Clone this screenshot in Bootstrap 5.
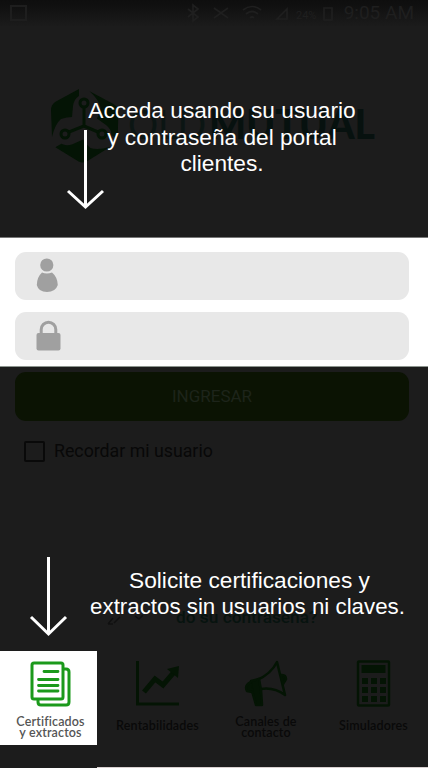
<!DOCTYPE html>
<html lang="es">
<head>
<meta charset="utf-8">
<meta name="viewport" content="width=device-width, initial-scale=1">
<title>Acceso clientes</title>
<link rel="stylesheet" href="https://cdn.jsdelivr.net/npm/bootstrap@5.3.0/dist/css/bootstrap.min.css">
<style>
body{background:#1c1c1c;font-family:"Liberation Sans",Arial,sans-serif;overflow:hidden}
.screen{width:428px;height:768px;overflow:hidden}
.statusbar{height:26px;padding:0 14px 0 10px;background:linear-gradient(#0e0e0e 0,#101010 20%,#1b1b1b 100%);color:#1f1f1f;font:19px/26px Roboto,sans-serif}
.brand{height:211px;padding:60px 0 0 48px}
.fields{height:130px;padding:14px 19px 0 15px;gap:12px;background:#fff;border-bottom:1px solid #8c948e;border-top:1px solid #777}
.field{height:48px;border-radius:11px;background:#e8e8e8;padding-left:21px}
.enter{height:49px;margin:5px 19px 0 15px;border-radius:11px;background:#0b1303;color:#1d241a;font:17px/49px Roboto,sans-serif;text-align:center}
.remember{margin:19px 0 0 24px;height:22px;gap:9px;color:#080808;font:17.75px/22px Roboto,sans-serif}
.tick{width:21px;height:21px;border:2px solid #090909;border-radius:2px}
.forgot{height:189px;padding:145px 0 0 107px;color:#07130f;font:500 17.3px/20px Roboto,sans-serif}
.options{height:94px}
.option{flex:none;font:600 12.5px/10.5px Lato,sans-serif;color:#090909;text-align:center;letter-spacing:.15px}
.option .caption{height:26px;padding-top:7px}
.option.lit{background:#fff;color:#555}
.option svg{margin-top:7px}
.foot{margin:22px 0 0 97px;height:1px;background:#d8d0d0}
.hint{position:absolute;color:#fff;font-size:22.7px;line-height:26.5px;text-align:center;white-space:nowrap}
.hint-login{left:88px;top:97px;width:268px}
.hint-docs{left:90px;top:566.5px;width:315px}
.hint-tight{font-size:22.3px}
.arrow{position:absolute}
.arrow-login{left:66px;top:129px}
.arrow-docs{left:29px;top:556px}
</style>
<script src="https://cdn.jsdelivr.net/npm/bootstrap@5.3.0/dist/js/bootstrap.bundle.min.js"></script>
</head>
<body>
<main class="screen position-relative d-flex flex-column">
  <div class="statusbar d-flex justify-content-between align-items-center flex-shrink-0">
    <svg width="18" height="18" fill="none" stroke="#1e1e1e" stroke-width="2"><rect x="1" y="2" width="15" height="14"/></svg>
    <div class="d-flex align-items-center gap-2">
      <svg width="150" height="20" fill="none" stroke="#1f1f1f" stroke-width="1.700"><path d="M2 6l10 8-5 4V2l5 4-10 8M28 5l14 10M28 15L42 5M57 7q9-7 18 0M60 11q6-5 12 0M64 15q2-2 4 0M91 16L101 6v10zM138 5h8v12h-8z"/><text x="110" y="16" font-size="11" fill="#1f1f1f" stroke="none">24%</text></svg>
      <span>9:05 AM</span>
    </div>
  </div>

  <div class="brand flex-shrink-0">
    <svg width="332" height="80" viewBox="0 0 332 80">
      <defs><path id="blade" d="M31 3L7 16Q3 19 3 24L4 51Q7 38 13 33Q19 31 24 31L25 20Q26 13 31 10Z"/></defs>
      <g fill="#041405"><use href="#blade"/><use href="#blade" transform="rotate(120 36 39)"/><use href="#blade" transform="rotate(240 36 39)"/></g>
      <g fill="none" stroke="#041405" stroke-width="3"><circle cx="36" cy="17" r="4"/><circle cx="17" cy="48" r="4"/><circle cx="54" cy="48" r="4"/><path d="M36 21v19L21 46M36 40l14 6"/></g>
      <text x="80" y="53" font-family="Lato,sans-serif" font-size="41" textLength="78" lengthAdjust="spacingAndGlyphs" fill="#0b1513">OLD</text>
      <text x="161" y="53" font-family="Lato,sans-serif" font-weight="900" font-size="41" textLength="166" lengthAdjust="spacingAndGlyphs" fill="#07110f">MUTUAL</text>
    </svg>
  </div>

  <div class="fields d-flex flex-column flex-shrink-0">
    <div class="field d-flex align-items-center flex-shrink-0">
      <svg width="26" height="38" viewBox="0 0 26 38" fill="#a0a0a0"><circle cx="10.800" cy="8" r="6.600"/><path d="M6 15.500Q10.800 17.500 16 15.500Q21.500 20 21.800 28Q19.500 35 11 35Q2.500 35 .8 28Q1 20 6 15.500Z"/></svg>
    </div>
    <div class="field d-flex align-items-center flex-shrink-0">
      <svg width="26" height="32" viewBox="0 0 26 32"><path d="M5.200 15V9.500a7.300 7.300 0 0 1 14.600 0V15" fill="none" stroke="#a0a0a0" stroke-width="3"/><rect x=".5" y="13" width="24" height="17.500" rx="2" fill="#a0a0a0"/></svg>
    </div>
  </div>

  <div class="enter flex-shrink-0">INGRESAR</div>
  <div class="remember d-flex align-items-center flex-shrink-0"><span class="tick"></span><span>Recordar mi usuario</span></div>

  <div class="forgot d-flex flex-shrink-0">
    <svg width="69" height="28" viewBox="0 0 69 28" fill="none" stroke="#101010"><path d="M1 17l5-6M7 16l6-6M1 17h5M28 9l4 3 4-4" stroke-width="1.500"/></svg>
    <span class="text-nowrap">do su contraseña?</span>
  </div>

  <div class="options d-flex flex-shrink-0">
    <div class="option lit d-flex flex-column align-items-center" style="width:97px">
      <svg width="46" height="52" viewBox="0 0 46 52" fill="none" stroke="#1b991b" stroke-width="3" stroke-linejoin="round"><rect x="6" y="5" width="31" height="36" rx="2"/><path d="M37 11h3q3 0 3 3v30q0 3-3 3H15q-3 0-3-3v-3"/><path d="M18 13.500h14M12.500 21.500h19.500M12.500 27.500h19.500M12.500 33h19.500" stroke-width="2.800" stroke-linecap="round"/></svg>
      <div class="caption ms-1 text-nowrap">Certificados<br>y extractos</div>
    </div>
    <div class="option d-flex flex-column align-items-center" style="width:121px">
      <svg width="46" height="52" viewBox="0 0 46 52" fill="none" stroke="#041404" stroke-width="3"><path d="M2.500 3v43H44"/><path d="M9 34l11-13 8 6L40 13" stroke-width="5"/><path d="M32 11l12-3-1 12z" fill="#041404" stroke="none"/></svg>
      <div class="caption mt-1 text-nowrap">Rentabilidades</div>
    </div>
    <div class="option d-flex flex-column align-items-center" style="width:96px">
      <svg width="46" height="52" viewBox="0 0 46 52" fill="none" stroke="#041404" stroke-width="2.500" stroke-linejoin="round"><path d="M14 22Q28 16 34 4L42 37Q31 29 18 31"/><path d="M8 23L16 21 18 32 19 47H13L9 33Z" fill="#041404"/><path d="M8 24Q1 27 4 33L9 34M38 17Q43 17 43 21L40 26Z" fill="#041404"/></svg>
      <div class="caption text-nowrap">Canales de<br>contacto</div>
    </div>
    <div class="option d-flex flex-column align-items-center" style="width:119px">
      <svg width="46" height="52" viewBox="0 0 46 52" fill="#041404"><rect x="7" y="3.500" width="31" height="44" rx="1" fill="none" stroke="#041404" stroke-width="2.500"/><path d="M10.500 7h24v8h-24zM11 20h6v6h-6zM20 20h6v6h-6zM29 20h6v6h-6zM11 29h6v6h-6zM20 29h6v6h-6zM29 29h6v6h-6zM11 38h6v6h-6zM20 38h6v6h-6zM29 38h6v6h-6z"/></svg>
      <div class="caption mt-1 text-nowrap">Simuladores</div>
    </div>
  </div>
  <div class="foot flex-shrink-0"></div>

  <div class="hint hint-login">Acceda usando su usuario<br>y contraseña del portal<br>clientes.</div>
  <svg class="arrow arrow-login" width="40" height="84" fill="none" stroke="#fff" stroke-width="3"><path d="M19.500 1v77M2 62l17.500 16L37 62"/></svg>
  <div class="hint hint-docs"><span class="ms-1">Solicite certificaciones y</span><br><span class="hint-tight">extractos sin usuarios ni claves.</span></div>
  <svg class="arrow arrow-docs" width="40" height="84" fill="none" stroke="#fff" stroke-width="3"><path d="M19.500 1v77M2 61l17.500 17L37 61"/></svg>
</main>
</body>
</html>
